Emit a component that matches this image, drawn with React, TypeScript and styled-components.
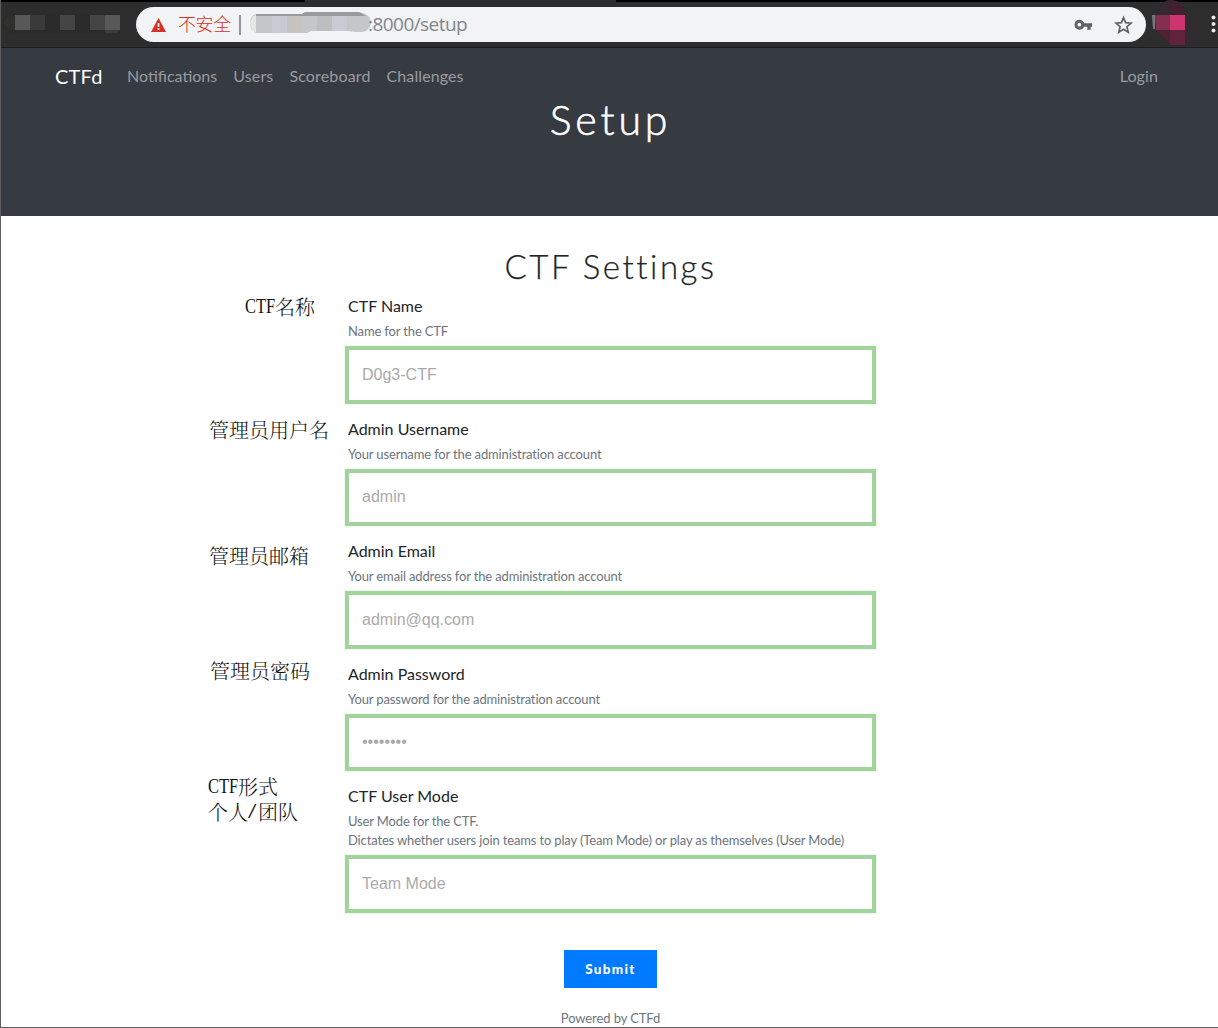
import React from 'react';
import styled, { createGlobalStyle } from 'styled-components';

const GlobalStyle = createGlobalStyle`
  * { box-sizing: border-box; }
  body { margin: 0; background: #fff; overflow: hidden; }
`;

const Page = styled.div`
  display: flex;
  flex-direction: column;
  width: 1218px;
  height: 1028px;
  border-left: 1px solid #5e5e5e;
  border-bottom: 1px solid #5e5e5e;
  background: #fff;
  color: #212529;
  font-family: Lato, 'Noto Sans CJK SC', sans-serif;
  font-size: 16px;
  overflow: hidden;
`;

const BrowserBar = styled.header`
  display: flex;
  flex: none;
  flex-direction: column;
  height: 48px;
  background: #2d2d2d;
  border-bottom: 1px solid #1d1d1f;
`;

const TabEdge = styled.div`
  display: flex;
  justify-content: space-between;
  height: 2px;
`;

const TabShade = styled.div<{ $width: number }>`
  width: ${p => p.$width}px;
  background: #000;
`;

const BarRow = styled.div`
  display: flex;
  height: 45px;
`;

const NavMosaic = styled.svg`
  flex: none;
  width: 135px;
  height: 45px;
`;

const AddressBar = styled.div`
  display: flex;
  align-items: center;
  width: 1010px;
  height: 35px;
  margin-top: 5px;
  border-radius: 18px;
  background: #f1f3f4;
  padding-left: 15px;
  font-family: 'Noto Sans', 'Noto Sans CJK SC', sans-serif;
  font-size: 18px;
  line-height: 35px;
`;

const Insecure = styled.span`
  width: 61px;
  margin-top: -2px;
  padding-left: 12px;
  font-family: 'Noto Sans CJK SC', sans-serif;
  font-weight: 300;
  color: #d93025;
  white-space: nowrap;
  letter-spacing: -0.4px;
`;

const Divider = styled.span`
  width: 2px;
  height: 20px;
  margin-left: 12px;
  background: #93979b;
`;

const HostMosaic = styled.svg`
  width: 122px;
  height: 24px;
  margin: -5px 0 0 9px;
`;

const UrlText = styled.span`
  margin-left: -4px;
  color: #80868b;
  font-family: 'Open Sans', sans-serif;
  font-size: 19px;
  letter-spacing: -0.55px;
`;

const BarIcons = styled.div`
  display: flex;
  align-items: center;
  gap: 21px;
  margin-left: auto;
  padding-right: 12px;
`;

const Profile = styled.svg`
  flex: none;
  width: 72px;
  height: 48px;
  margin-top: -2px;
`;

const Hero = styled.section`
  flex: none;
  height: 168px;
  background: #363a41;
  color: #fff;
`;

const Nav = styled.nav`
  display: flex;
  align-items: center;
  height: 56px;
  padding: 0 60px 0 54px;
`;

const Brand = styled.a`
  width: 72px;
  font-size: 20px;
  line-height: 30px;
  letter-spacing: 0.2px;
`;

const NavLink = styled.a<{ $spacing?: number }>`
  margin-right: 16px;
  color: #9a9ca0;
  line-height: 24px;
  letter-spacing: ${p => p.$spacing ?? 0}px;
`;

const LoginLink = styled(NavLink)`
  margin: 0 0 0 auto;
`;

const HeroTitle = styled.h1`
  margin: -8px 0 0;
  padding-left: 2px;
  text-align: center;
  font-size: 41px;
  font-weight: 300;
  line-height: 47px;
  letter-spacing: 3.9px;
  -webkit-text-stroke: 0.6px currentColor;
`;

const Content = styled.main`
  display: flex;
  flex-direction: column;
  padding-left: 206px;
`;

const SectionTitle = styled.h2`
  width: 806px;
  height: 77px;
  margin: 0;
  padding: 30px 0 0 1px;
  text-align: center;
  font-size: 33px;
  font-weight: 300;
  line-height: 40px;
  letter-spacing: 2.5px;
  -webkit-text-stroke: 0.25px currentColor;
`;

const FormRow = styled.div<{ $height: number }>`
  display: grid;
  grid-template-columns: 138px 531px;
  height: ${p => p.$height}px;
`;

const Note = styled.div<{ $left: number; $top: number }>`
  padding-left: ${p => p.$left}px;
  margin-top: ${p => p.$top}px;
  font-family: 'Noto Serif CJK SC', 'Noto Sans CJK SC', serif;
  font-size: 20px;
  font-weight: 300;
  color: #111;
  white-space: nowrap;
`;

const NoteLine = styled.div`
  display: flex;
  height: 25px;
  line-height: 25px;
`;

const NoteLatin = styled.span<{ $width: number }>`
  width: ${p => p.$width}px;
  font-family: 'Liberation Serif', serif;
  transform: scaleX(${p => (p.$width > 10 ? 0.82 : 1.5)});
  transform-origin: left;
`;

const Field = styled.div`
  display: flex;
  flex-direction: column;
`;

const FieldTitle = styled.label`
  padding-left: 3px;
  margin-bottom: 4px;
  line-height: 25px;
`;

const Hint = styled.small`
  padding-left: 3px;
  margin-bottom: 5px;
  color: #6c757d;
  font-size: 13px;
  line-height: 19px;
  letter-spacing: -0.145px;
`;

const Input = styled.input`
  width: 531px;
  height: 57.5px;
  border: 4px solid #a3d39c;
  border-radius: 0;
  outline: 1px solid #eef8ec;
  background: #fff;
  padding: 0 13px;
  color: #aaa;
  font: 16px 'Liberation Sans', Arial, sans-serif;
`;

const Submit = styled.button`
  flex: none;
  width: 93px;
  height: 38px;
  margin: 38.5px 0 0 357px;
  border: 0;
  background: #007bff;
  color: #fff;
  font: 900 13.5px Lato, sans-serif;
  letter-spacing: 1.3px;
`;

const Footer = styled.footer`
  width: 806px;
  padding: 20px 0 0 1px;
  text-align: center;
  color: #6c757d;
  font-size: 13px;
  line-height: 20px;
  letter-spacing: -0.1px;
`;

const fields = [
  { title: 'CTF Name', hints: ['Name for the CTF'], value: 'D0g3-CTF', note: ['CTF名称'], left: 38, top: 1, height: 122.5 },
  { title: 'Admin Username', hints: ['Your username for the administration account'], value: 'admin', note: ['管理员用户名'], left: 2, top: 1, height: 122.5 },
  { title: 'Admin Email', hints: ['Your email address for the administration account'], value: 'admin@qq.com', note: ['管理员邮箱'], left: 2, top: 5, height: 122.5 },
  { title: 'Admin Password', hints: ['Your password for the administration account'], value: 'password', password: true, note: ['管理员密码'], left: 3, top: -3, height: 122.5 },
  { title: 'CTF User Mode', hints: ['User Mode for the CTF.', 'Dictates whether users join teams to play (Team Mode) or play as themselves (User Mode)'], value: 'Team Mode', note: ['CTF形式', '个人/团队'], left: 1, top: -9, height: 128.5 },
];

function NoteText({ text }: { text: string }) {
  return (
    <NoteLine>
      {text.split(/(CTF|\/)/).filter(Boolean).map(part =>
        part === 'CTF' || part === '/'
          ? <NoteLatin key={part} $width={part.length * 10}>{part}</NoteLatin>
          : <span key={part}>{part}</span>
      )}
    </NoteLine>
  );
}

export default function App() {
  return (
    <Page>
      <GlobalStyle />
      <BrowserBar>
        <TabEdge><TabShade $width={304} /><TabShade $width={602} /></TabEdge>
        <BarRow>
          <NavMosaic viewBox="0 0 135 45">
            <path d="M12 11H116Q119 11 119 14V28Q119 31 115 31H12Q2 29 2 21T12 11" fill="#2b2b2b" />
            <path d="M14 13V28H12Q4 27 3 21Q4 14 14 13" fill="#30302d" />
            <path d="M14 13h15v15H14zM104 13h15v15h-15z" fill="#585858" />
            <path d="M29 13h15v15H29z" fill="#3a3a3a" />
            <path d="M59 13h15v15H59zM89 13h15v15H89z" fill="#454545" />
            <path d="M104 28h15l-3 3h-12z" fill="#3b3b3b" />
          </NavMosaic>
          <AddressBar>
            <svg width="15" height="14" viewBox="0 0 15 14"><path d="M7.5 0L15 14H0Z" fill="#d93025" /><path d="M6.7 5h1.7v4H6.7zM6.7 10.3h1.7V12H6.7z" fill="#fff" /></svg>
            <Insecure>不安全</Insecure>
            <Divider />
            <HostMosaic viewBox="0 0 122 24">
              <path d="M6 4H52L55 2H109Q121 4 121 13Q119 22 111 22H105L99 21H61L57 23H6Q0 20 0 13T6 4" fill="#c5c6c8" />
              <path d="M0 13Q1 7 6 5V23Q1 20 0 13" fill="#e5e6e8" />
              <path d="M6 4H52L55 2H109L116 6H6z" fill="#999a9c" />
              <path d="M22 6h15v17H22zM82 6h15v15H82z" fill="#cacbd2" />
              <path d="M37 6h15v17H37z" fill="#c7c3c0" />
              <path d="M67 6h15v15H67z" fill="#bebec0" />
            </HostMosaic>
            <UrlText>:8000/setup</UrlText>
            <BarIcons>
              <svg width="19" height="12" viewBox="0 0 19 12"><path fillRule="evenodd" d="M5.3.7a5 5 0 0 1 4.8 3.5h8v3.6h-1.4v3h-3.4v-3h-3.2A5 5 0 1 1 5.3.7Zm0 3.1a1.9 1.9 0 1 0 0 3.8 1.9 1.9 0 0 0 0-3.8Z" fill="#5f6368" /></svg>
              <svg width="20" height="20" viewBox="0 0 20 20"><path d="M9.5 2.6l2.1 5 5.5.5-4.2 3.6 1.3 5.4-4.7-2.9-4.7 2.9 1.3-5.4-4.2-3.6 5.5-.5z" fill="none" stroke="#5f6368" strokeWidth="1.7" /></svg>
            </BarIcons>
          </AddressBar>
          <Profile viewBox="1146 0 72 48">
            <path d="M1156 15Q1160 1 1170 0Q1184 0 1185 15L1200 27V40L1193 45H1185V47H1170L1156 30z" fill="#302b2e" />
            <path d="M1157 15Q1160 1 1170 0V15z" fill="#35282e" />
            <path d="M1170 0Q1184 2 1185 15H1170z" fill="#43202e" />
            <path d="M1152 15h3v14h-2z" fill="#777" />
            <path d="M1155 15h15v15h-14z" fill="#83304f" />
            <path d="M1170 15h15v15h-15z" fill="#cc356f" />
            <path d="M1156 30h14v14z" fill="#4c2334" />
            <path d="M1170 30h15v15h-15z" fill="#61223c" />
            <g fill="#ececec"><circle cx="1213.5" cy="17.5" r="2" /><circle cx="1213.5" cy="24" r="2" /><circle cx="1213.5" cy="30.5" r="2" /></g>
          </Profile>
        </BarRow>
      </BrowserBar>
      <Hero>
        <Nav>
          <Brand>CTFd</Brand>
          <NavLink>Notifications</NavLink>
          <NavLink $spacing={0.15}>Users</NavLink>
          <NavLink $spacing={0.15}>Scoreboard</NavLink>
          <NavLink $spacing={0.1}>Challenges</NavLink>
          <LoginLink $spacing={0.1}>Login</LoginLink>
        </Nav>
        <HeroTitle>Setup</HeroTitle>
      </Hero>
      <Content>
        <SectionTitle>CTF Settings</SectionTitle>
        {fields.map(f => (
          <FormRow key={f.title} $height={f.height}>
            <Note $left={f.left} $top={f.top}>
              {f.note.map(line => <NoteText key={line} text={line} />)}
            </Note>
            <Field>
              <FieldTitle>{f.title}</FieldTitle>
              <Hint>{f.hints.map((line, i) => <React.Fragment key={line}>{i > 0 && <br />}{line}</React.Fragment>)}</Hint>
              <Input type={f.password ? 'password' : 'text'} defaultValue={f.value} />
            </Field>
          </FormRow>
        ))}
        <Submit>Submit</Submit>
        <Footer>Powered by CTFd</Footer>
      </Content>
    </Page>
  );
}
